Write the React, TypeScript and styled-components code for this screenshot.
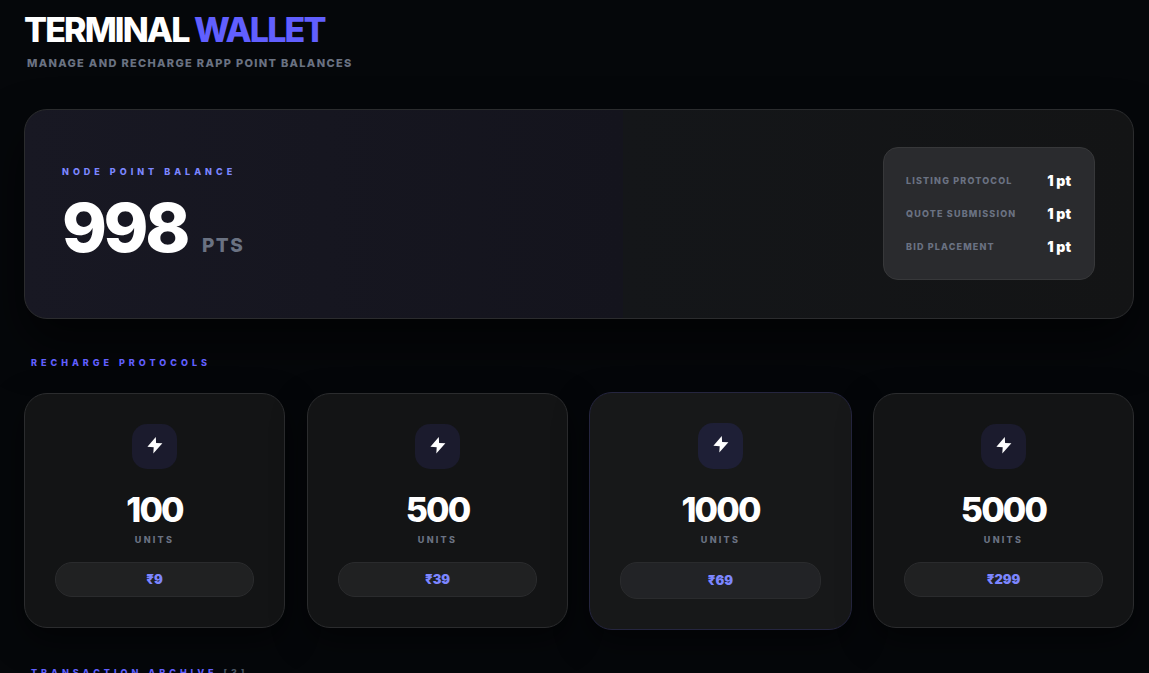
import React from "react";
import styled, { createGlobalStyle, css } from "styled-components";

const GlobalStyle = createGlobalStyle`
  *, *::before, *::after { box-sizing: border-box; }
  body {
    margin: 0;
    background: #05070a;
    color: #ffffff;
    font-family: Inter, "Liberation Sans", sans-serif;
    scrollbar-width: none;
  }
`;

const Page = styled.main`
  min-height: 100vh;
  padding: 12px 15px 24px 24px;
`;

const Title = styled.h1`
  margin: 0;
  font-size: 34px;
  line-height: 36px;
  font-weight: 800;
  letter-spacing: -0.055em;
`;

const Accent = styled.span`
  color: #615fff;
`;

const Subtitle = styled.p`
  margin: 8px 0 0 3px;
  font-size: 11px;
  line-height: 14px;
  font-weight: 800;
  letter-spacing: 0.12em;
  text-transform: uppercase;
  color: #6a7282;
`;

const Hero = styled.section`
  display: flex;
  align-items: center;
  justify-content: space-between;
  margin: 39px 0 37px;
  padding: 37px 38px 38px 37px;
  border: 1px solid #2b2c2e;
  border-radius: 23px;
  background: linear-gradient(90deg, #181823 0%, #14141d 54%, #141619 54%, #131415 100%);
  box-shadow: 0 24px 48px rgba(0, 0, 0, 0.6);
`;

const BalanceLabel = styled.h2`
  margin: 0;
  font-size: 9px;
  line-height: 14px;
  font-weight: 800;
  letter-spacing: 4px;
  text-transform: uppercase;
  color: #7c86ff;
`;

const Balance = styled.div`
  display: flex;
  align-items: baseline;
  gap: 15px;
  margin: 14px 0 2px;
`;

const BalanceValue = styled.strong`
  font-size: 68px;
  line-height: 68px;
  font-weight: 800;
  letter-spacing: -0.05em;
`;

const BalanceUnit = styled.span`
  font-size: 19px;
  font-weight: 800;
  letter-spacing: 0.08em;
  color: #6a7282;
`;

const Rates = styled.dl`
  display: flex;
  flex-direction: column;
  gap: 15px;
  width: 212px;
  margin: 0;
  padding: 23px 23px 24px 22px;
  border: 1px solid #37383a;
  border-radius: 15px;
  background: #2a2b2e;
`;

const Rate = styled.div`
  display: flex;
  align-items: center;
  justify-content: space-between;
  height: 18px;
`;

const RateName = styled.dt`
  font-size: 9px;
  font-weight: 800;
  letter-spacing: 0.13em;
  text-transform: uppercase;
  color: #6a7282;
`;

const RateCost = styled.dd`
  margin: 0;
  font-size: 14px;
  font-weight: 900;
`;

const SectionTitle = styled.h2`
  margin: 0 0 0 7px;
  font-size: 9px;
  line-height: 14px;
  font-weight: 800;
  letter-spacing: 4px;
  text-transform: uppercase;
  color: #615fff;
`;

const Count = styled.span`
  color: #4a5565;
`;

const Plans = styled.div`
  display: grid;
  grid-template-columns: repeat(4, 1fr);
  gap: 22px;
  margin: 23px 0 38px;
`;

const Plan = styled.article<{ $popular?: boolean }>`
  display: flex;
  flex-direction: column;
  align-items: center;
  padding: 30px;
  border: 1px solid #2b2c2e;
  border-radius: 23px;
  background: #131415;
  box-shadow: 0 12px 32px rgba(0, 0, 0, 0.5);
  ${(p) =>
    p.$popular &&
    css`
      margin: -1px -1px -2px;
      border-color: #25253f;
      background: #171819;
    `}
`;

const IconTile = styled.div<{ $popular?: boolean }>`
  width: 45px;
  height: ${(p) => (p.$popular ? 46 : 45)}px;
  border-radius: 15px;
  background: ${(p) => (p.$popular ? "#1e1f36" : "#1b1b2d")};
`;

const Amount = styled.strong`
  margin-top: 23px;
  font-size: 34px;
  line-height: 36px;
  font-weight: 800;
  letter-spacing: -0.055em;
`;

const Units = styled.span`
  margin-top: 5px;
  font-size: 9px;
  line-height: 14px;
  font-weight: 800;
  letter-spacing: 0.25em;
  text-transform: uppercase;
  color: #6a7282;
`;

const Price = styled.button<{ $popular?: boolean }>`
  width: 100%;
  height: ${(p) => (p.$popular ? 37 : 35)}px;
  margin-top: 15px;
  padding: 0 0 1px;
  border: 1px solid #2a2b2d;
  border-radius: 17px;
  background: ${(p) => (p.$popular ? "#222326" : "#202122")};
  color: #7c86ff;
  font-family: inherit;
  font-size: 13px;
  font-weight: 900;
`;

const rates = ["Listing Protocol", "Quote Submission", "Bid Placement"];

const plans = [
  { amount: "100", price: "₹9" },
  { amount: "500", price: "₹39" },
  { amount: "1000", price: "₹69", popular: true },
  { amount: "5000", price: "₹299" },
];

const Bolt = () => (
  <svg width="45" height="45" viewBox="0 0 45 45" fill="#fff" aria-hidden="true">
    <path d="M23.8 13 15.4 22.8 21.7 23.2 21.3 29.6 30.4 19.2 24.1 18.9Z" />
  </svg>
);

export default function App() {
  return (
    <>
      <GlobalStyle />
      <Page>
        <header>
          <Title>
            TERMINAL <Accent>WALLET</Accent>
          </Title>
          <Subtitle>Manage and recharge RAPP point balances</Subtitle>
        </header>

        <Hero>
          <div>
            <BalanceLabel>Node Point Balance</BalanceLabel>
            <Balance>
              <BalanceValue>998</BalanceValue>
              <BalanceUnit>PTS</BalanceUnit>
            </Balance>
          </div>
          <Rates>
            {rates.map((name) => (
              <Rate key={name}>
                <RateName>{name}</RateName>
                <RateCost>1 pt</RateCost>
              </Rate>
            ))}
          </Rates>
        </Hero>

        <section>
          <SectionTitle>Recharge Protocols</SectionTitle>
          <Plans>
            {plans.map(({ amount, price, popular }) => (
              <Plan key={amount} $popular={popular}>
                <IconTile $popular={popular}>
                  <Bolt />
                </IconTile>
                <Amount>{amount}</Amount>
                <Units>Units</Units>
                <Price type="button" $popular={popular}>
                  {price}
                </Price>
              </Plan>
            ))}
          </Plans>
        </section>

        <section>
          <SectionTitle>
            Transaction Archive <Count>[3]</Count>
          </SectionTitle>
        </section>
      </Page>
    </>
  );
}
